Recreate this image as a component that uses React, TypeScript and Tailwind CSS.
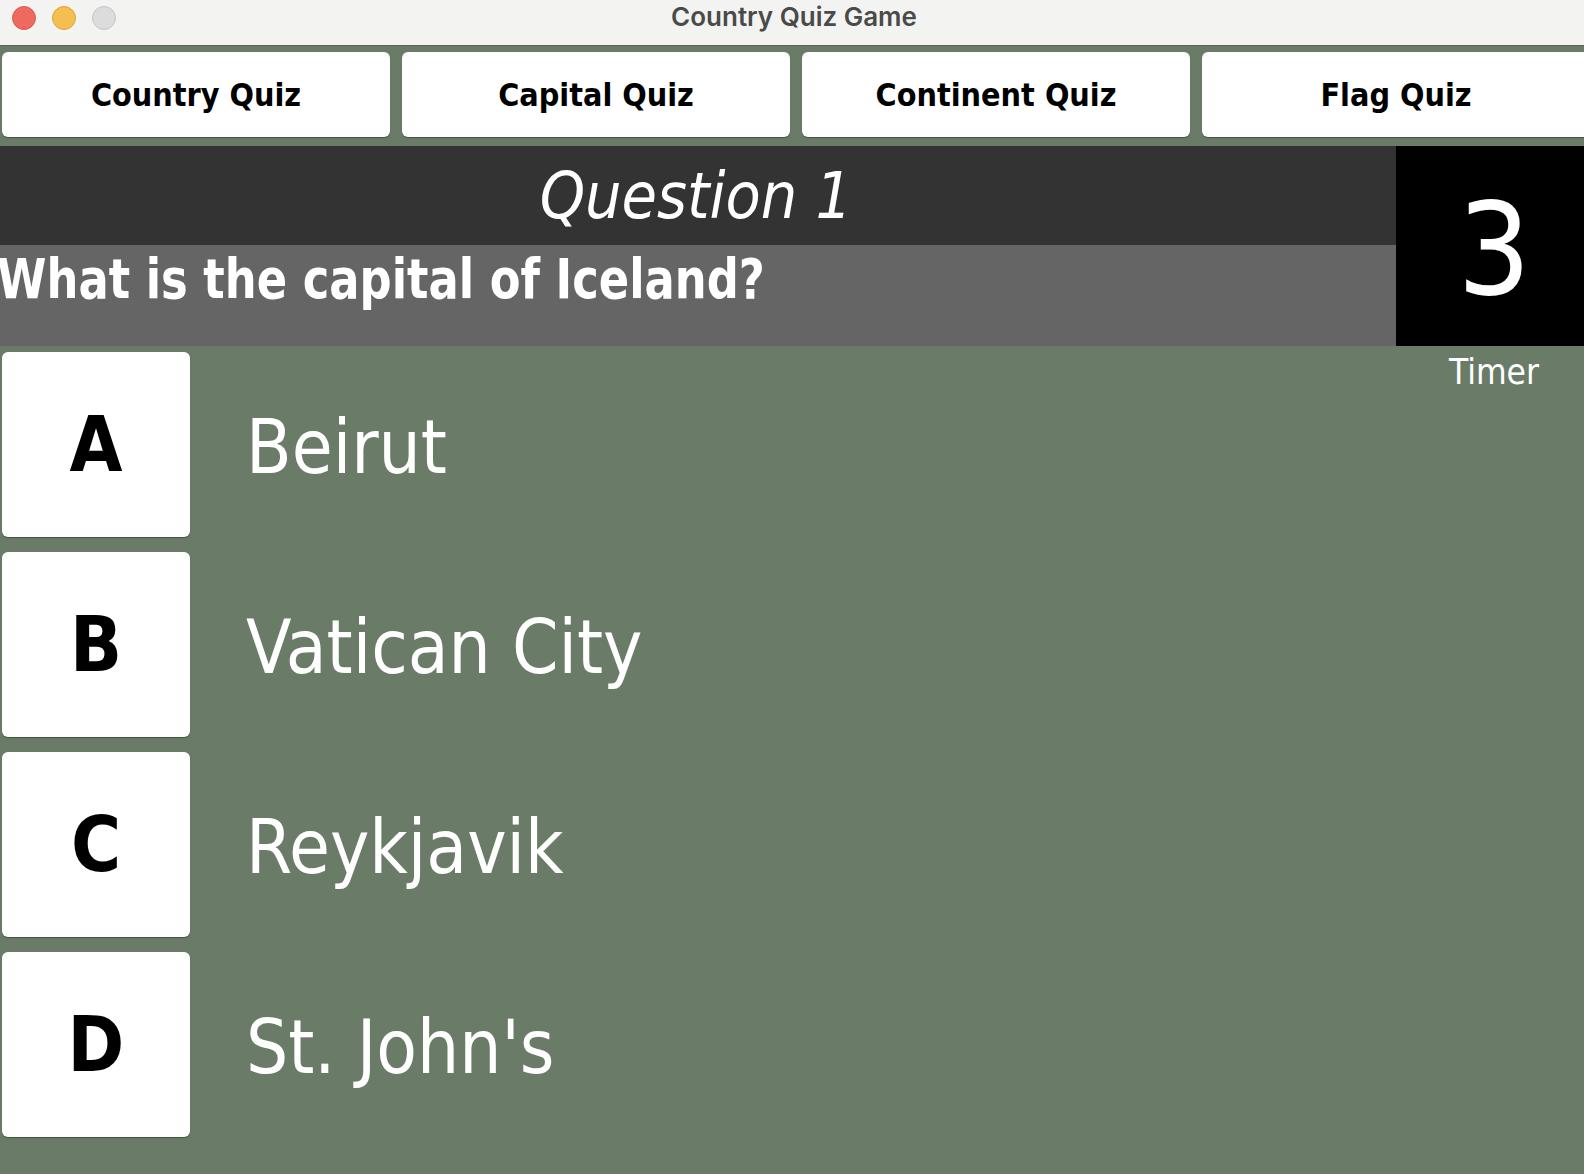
import React from "react";

const FONT = "font-['DejaVu_Sans_Condensed','DejaVu_Sans',sans-serif]";

const TABS = ["Country Quiz", "Capital Quiz", "Continent Quiz", "Flag Quiz"];

const ANSWERS = [
  { key: "A", text: "Beirut" },
  { key: "B", text: "Vatican City" },
  { key: "C", text: "Reykjavik" },
  { key: "D", text: "St. John's" },
];

function TitleBar() {
  return (
    <div className="relative h-[46px] shrink-0 bg-[#f3f3f2] border-b border-[#56654f] flex items-center justify-center">
      {/* Window controls */}
      <div className="absolute left-[12px] top-[6px] flex gap-[16px]">
        <span className="h-[24px] w-[24px] rounded-full bg-[#ee6a5f] border border-[#d65a50]" />
        <span className="h-[24px] w-[24px] rounded-full bg-[#f5be4f] border border-[#dba541]" />
        <span className="h-[24px] w-[24px] rounded-full bg-[#dcdcdc] border border-[#c4c4c4]" />
      </div>
      <span className="font-['Inter',sans-serif] text-[26px] font-semibold text-[#4a4a4a] -mt-[12px] ml-[4px]">
        Country Quiz Game
      </span>
    </div>
  );
}

export default function App() {
  return (
    <div className={`w-[1584px] h-[1174px] overflow-hidden bg-[#6a7c67] flex flex-col ${FONT}`}>
      <TitleBar />

      {/* Quiz mode tabs */}
      <div className="flex gap-[12px] pl-[2px] pt-[6px] h-[100px] shrink-0">
        {TABS.map((t) => (
          <button
            key={t}
            className="w-[388px] h-[85px] shrink-0 rounded-[6px] bg-white shadow-[0_1px_1px_rgba(0,0,0,0.35)] text-[32px] font-bold text-black"
          >
            {t}
          </button>
        ))}
      </div>

      {/* Question header + timer */}
      <div className="flex h-[200px] shrink-0">
        <div className="flex-1 flex flex-col">
          <div className="h-[99px] bg-[#333333] flex items-center justify-center text-white italic text-[64px] pr-[4px]">
            Question 1
          </div>
          <div className="h-[101px] bg-[#656565] text-white font-bold text-[56px] leading-none pt-[6px] -ml-[3px] whitespace-nowrap">
            <span className="inline-block origin-left scale-x-[0.89]">What is the capital of Iceland?</span>
          </div>
        </div>
        <div className="w-[188px] bg-black flex items-center justify-center text-white text-[128px] leading-none pl-[8px] pt-[8px]">
          3
        </div>
      </div>

      {/* Answers */}
      <div className="flex flex-1">
        <div className="flex-1 flex flex-col gap-[15px] pt-[6px] pl-[2px]">
          {ANSWERS.map((a) => (
            <div key={a.key} className="flex items-center">
              <button className="w-[188px] h-[185px] shrink-0 rounded-[6px] bg-white shadow-[0_1px_1px_rgba(0,0,0,0.35)] text-[76px] font-bold text-black leading-none">
                {a.key}
              </button>
              <span className="ml-[56px] text-white text-[74px] leading-none pt-[4px]">{a.text}</span>
            </div>
          ))}
        </div>
        <div className="w-[188px] text-center text-white text-[35px] pt-[5px] leading-tight pl-[8px]">
          Timer
        </div>
      </div>
    </div>
  );
}
